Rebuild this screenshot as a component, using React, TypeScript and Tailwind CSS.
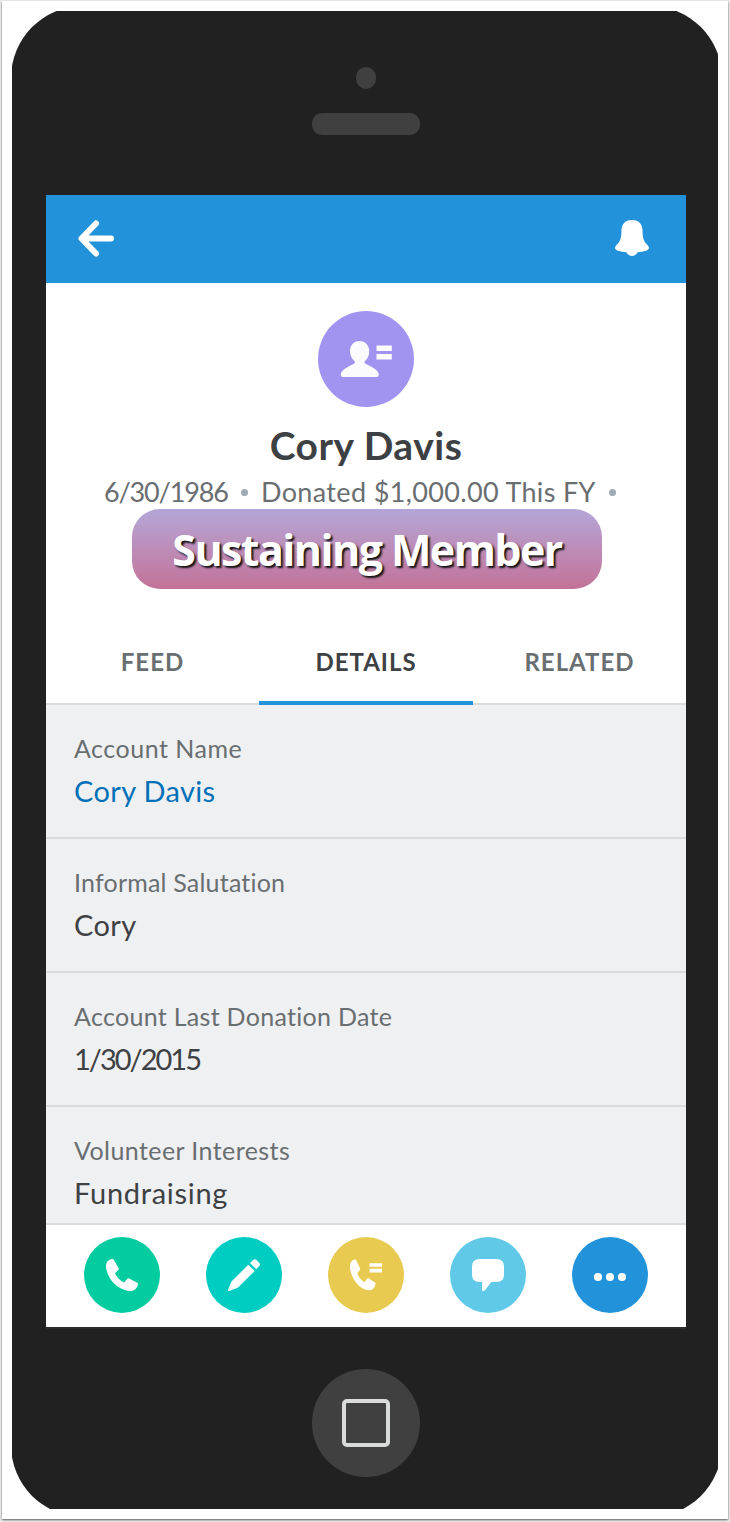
import type { ReactNode } from "react";

function Dot() {
  return <span className="h-[7px] w-[7px] shrink-0 rounded-full bg-[#9faab5]" />;
}

function Field({ label, value, labelClass, valueClass }: { label: string; value: string; labelClass: string; valueClass: string }) {
  return (
    <div className="flex h-[134px] shrink-0 flex-col border-b-2 border-[#d9dbdd] px-7 pt-[27px]">
      <div className={`h-8 whitespace-nowrap text-[25px] leading-8 text-[#696e71] ${labelClass}`}>{label}</div>
      <div className={`mt-[9px] h-9 whitespace-nowrap text-[29px] leading-9 ${valueClass}`}>{value}</div>
    </div>
  );
}

function Action({ color, label, children }: { color: string; label: string; children: ReactNode }) {
  return (
    <button aria-label={label} className={`h-[76px] w-[76px] rounded-full ${color}`}>
      <svg viewBox="0 0 76 76" className="h-[76px] w-[76px]" fill="#fff">{children}</svg>
    </button>
  );
}

const handset =
  "M29.5 22.2 L34.7 31.2 Q35 32 34.4 32.7 L31 36.2 C33 40.5 36 43.5 40 45.6 L43.6 41.6 Q44.3 41 45.2 41.4 L53.3 45.8 Q54.2 46.4 53.9 47.5 C52.6 53 48.8 54.3 44.5 53.9 C33.5 52.5 23.5 42 22 30.5 C21.6 25.5 24.2 22.5 28 22 Q29 21.8 29.5 22.2 Z";

export default function App() {
  return (
    <div className="h-[1522px] w-[730px] bg-[#eeeeee] pl-[2px] pt-px font-['Lato',sans-serif]">
      <div className="h-[1518px] w-[726px] bg-white pl-[10px] pt-[10px] shadow-[0_1px_2px_#555]">
        <div className="h-[1498px] w-[706px] overflow-hidden">
          <div className="-ml-px -mt-[5px] flex h-[1511px] w-[711px] flex-col items-center rounded-[72px] bg-[#212121] pr-[3px]">
            <div className="ml-[2px] mt-[61px] h-[22px] w-5 shrink-0 rounded-full bg-[#404040]" />
            <div className="ml-[2px] mt-6 h-[22px] w-[108px] shrink-0 rounded-[10px] bg-[#404040]" />
            <div className="ml-[2px] mt-[60px] flex h-[1134px] w-[640px] shrink-0 flex-col border-b-2 border-[#2d2d2d] bg-white">
              <header className="flex h-[88px] shrink-0 items-center justify-between bg-[#2293da] px-[30px]">
                <svg viewBox="0 0 40 40" className="h-10 w-10" fill="none" stroke="#fff" strokeWidth="6" strokeLinecap="round" strokeLinejoin="round">
                  <path d="M20 4.5 L5.5 19.5 L20 34.5 M7 19.5 H35" />
                  <path d="M6 19.5 L11 15.5 V23.5 Z" fill="#fff" strokeWidth="3" />
                </svg>
                <svg viewBox="0 0 48 48" className="h-12 w-12" fill="#fff">
                  <path d="M24 5 C16.5 5 13.5 10 13.5 15.5 C13.3 23 12.5 26 9 29.5 C7.6 31 7 32 7.1 33.5 C7.7 35.5 12 36.7 18.5 37.2 Q20.5 41 24 41 T29.5 37.2 C36 36.7 40.3 35.5 40.9 33.5 C41 32 40.4 31 39 29.5 C35.5 26 34.7 23 34.5 15.5 C34.5 10 31.5 5 24 5 Z" />
                </svg>
              </header>
              <section className="flex h-[338px] shrink-0 flex-col items-center pt-7">
                <div className="h-24 w-24 shrink-0 rounded-full bg-[#a094f0]">
                  <svg viewBox="0 0 96 96" className="h-24 w-24" fill="#fbfaff">
                    <path d="M41.5 30 C35.5 30 32 34.8 32 40 C32 44.5 34 48 36.5 50 C37.5 51.2 37 52.2 35.5 53 C28.5 56.5 23 59.5 22.7 63.5 Q22.7 66 25 66 H58.5 Q60.8 66 60.8 63.5 C60.5 59.5 55 56.5 48 53 C46.5 52.2 46 51.2 47 50 C49.5 48 51.2 44.5 51.2 40 C51.2 34.8 47.5 30 41.5 30 Z" />
                    <path d="M58.5 34.5 H73.8 V40 H58.5 Z M58.5 43 H73.8 V48.5 H58.5 Z" />
                  </svg>
                </div>
                <h1 className="mt-[14px] h-12 whitespace-nowrap text-[39px] font-bold leading-[48px] tracking-[0.5px] text-[#3e4144]">Cory Davis</h1>
                <div className="-ml-[12px] mt-[7px] flex h-8 w-[512px] shrink-0 items-center justify-between whitespace-nowrap text-[27px] leading-8 text-[#696e71]">
                  <span className="tracking-[-1.15px]">6/30/1986</span>
                  <Dot />
                  <span className="tracking-[0.35px]">Donated $1,000.00 This FY</span>
                  <Dot />
                </div>
                <div className="ml-[2px] mt-px flex h-20 w-[470px] shrink-0 items-center justify-center rounded-[28px] bg-linear-to-b from-[#b3a6d8] to-[#c27298] pt-[2px] font-['Open_Sans',sans-serif] text-[43px] font-bold whitespace-nowrap tracking-[-1.6px] text-white [text-shadow:2px_2px_2px_#111]">
                  Sustaining Member
                </div>
              </section>
              <nav className="flex h-[84px] shrink-0 border-b-2 border-[#d9dbdd] text-center text-[24px] font-bold leading-[82px] tracking-[1px] text-[#696e71]">
                <div className="w-[213px]">FEED</div>
                <div className="h-[84px] w-[214px] border-b-4 border-[#2293da] text-[#3e4144]">DETAILS</div>
                <div className="w-[213px]">RELATED</div>
              </nav>
              <main className="flex h-[518px] shrink-0 flex-col overflow-hidden bg-[#eff0f2] text-[#3e4144]">
                <Field label="Account Name" value="Cory Davis" labelClass="tracking-[0.5px]" valueClass="tracking-[0.35px] text-[#0070b8]" />
                <Field label="Informal Salutation" value="Cory" labelClass="tracking-[0.2px]" valueClass="tracking-[0.35px]" />
                <Field label="Account Last Donation Date" value="1/30/2015" labelClass="tracking-[0.3px]" valueClass="tracking-[-2px]" />
                <Field label="Volunteer Interests" value="Fundraising" labelClass="tracking-[0.42px]" valueClass="tracking-[0.7px]" />
              </main>
              <footer className="flex h-[104px] shrink-0 justify-between border-t-2 border-[#d9dbdd] px-[38px] pt-3">
                <Action color="bg-[#04cca1]" label="Call">
                  <path d={handset} />
                </Action>
                <Action color="bg-[#00cdc2]" label="Edit">
                  <path d="M42.3 27.8 L48.7 34 L32 50.5 Q31.3 51 30.5 51.3 L23 54 Q21.7 54.3 22 53 L25 45.5 Q25.3 44.8 26 44 Z M44 26 L47.5 22.8 Q48.8 21.6 50.2 22.8 L53.4 26 Q54.6 27.4 53.4 28.7 L50.2 32.2 Z" />
                </Action>
                <Action color="bg-[#e9ca50]" label="Log a call">
                  <path d={handset} transform="translate(4.4 1.5) scale(.8 .96)" />
                  <path d="M41.5 26.2 H54 V29.8 H41.5 Z M41.5 31.8 H54 V35.5 H41.5 Z" />
                </Action>
                <Action color="bg-[#5fc9e7]" label="Comment">
                  <path d="M29.5 22 H46.5 Q54 22 54 29.5 V37.5 Q54 45 46.5 45 H41.3 L35 53.2 Q34.2 54.2 32.8 54 Q32 53.8 32 53 V45 H29.5 Q22 45 22 37.5 V29.5 Q22 22 29.5 22 Z" />
                </Action>
                <Action color="bg-[#2293da]" label="More">
                  <circle cx="26" cy="40" r="4.1" />
                  <circle cx="38" cy="40" r="4.1" />
                  <circle cx="50" cy="40" r="4.1" />
                </Action>
              </footer>
            </div>
            <div className="ml-[2px] mt-10 flex h-[108px] w-[108px] shrink-0 items-center justify-center rounded-full bg-[#404040]">
              <div className="h-12 w-12 rounded-[5px] border-4 border-[#d9dbdb]" />
            </div>
          </div>
        </div>
      </div>
    </div>
  );
}
